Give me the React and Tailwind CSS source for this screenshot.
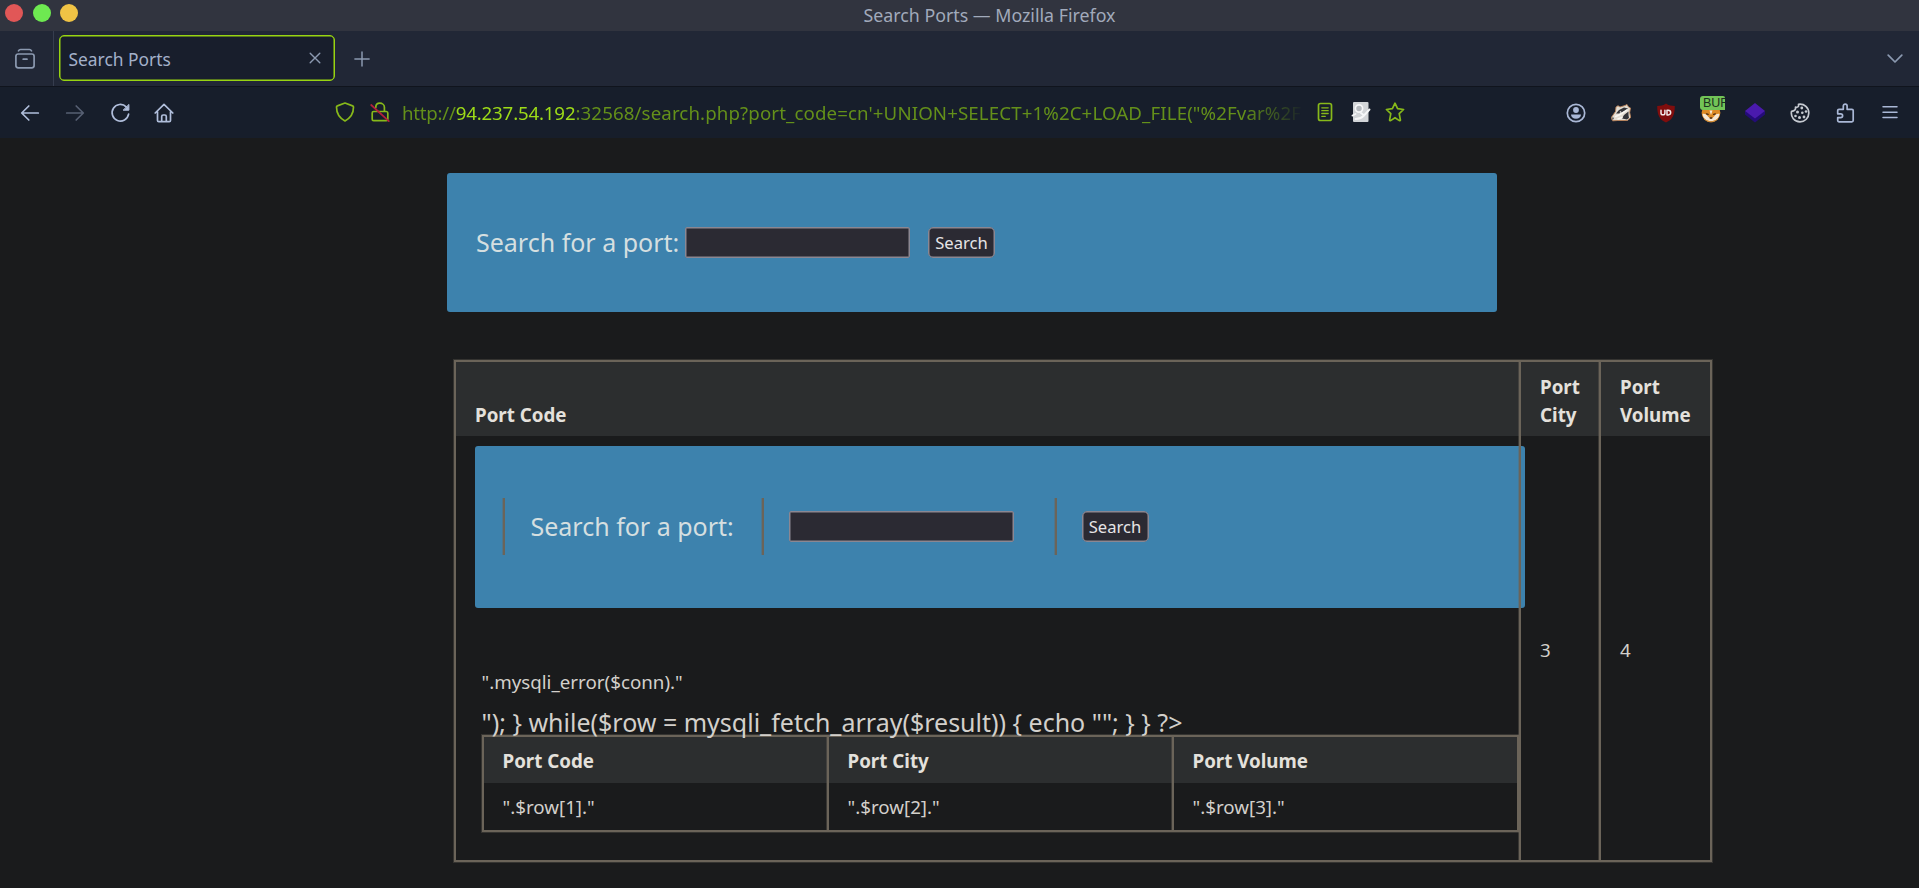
const LEFT_LINE = "border-l-2 border-[#6b6459] shadow-[-1px_0_0_rgba(107,100,89,0.4)]";
const FRAME = "border-2 border-[#6b6459] shadow-[0_0_0_1px_rgba(107,100,89,0.35)]";

function TitleBar() {
  return (
    <header className="grid h-[31px] shrink-0 grid-cols-[1fr_auto_1fr] items-center bg-[#31343f]">
      <div className="flex gap-[9.5px] self-start pt-[4px] pl-[5px]">
        <span className="size-[18px] rounded-full bg-[#e15757]" />
        <span className="size-[18px] rounded-full bg-[#6ee951]" />
        <span className="size-[18px] rounded-full bg-[#f0c345]" />
      </div>
      <h1 className="pl-[60px] text-[17.8px] leading-none whitespace-nowrap text-[#a1aabb]">Search Ports — Mozilla Firefox</h1>
      <span />
    </header>
  );
}

function TabStrip() {
  return (
    <div className="flex h-[55px] shrink-0 items-stretch bg-[#212736] text-[#8b99b0]">
      <div className="flex w-[54px] items-center border-r border-[#363d4e] pl-[14px]">
        <svg className="size-[22px]" viewBox="0 0 22 22" fill="none" stroke="currentColor" strokeWidth="1.7" strokeLinecap="round">
          <rect x="1.9" y="6" width="18.2" height="13.8" rx="2.3" />
          <path d="M4.5 2.8C5 1.9 5.6 1.5 6.5 1.5h9c.9 0 1.5.4 2 1.3M9.2 11.2h3.8" />
        </svg>
      </div>
      <div className="mt-[4px] ml-[5px] flex h-[46px] w-[276px] items-center justify-between rounded-[5px] border border-[#98d411] bg-[#181e2c] pr-[13px] pl-[8.5px] shadow-[inset_0_0_0_0.5px_#98d411]">
        <span className="mt-[2px] text-[17.4px] text-[#a3b0c9]">Search Ports</span>
        <svg className="size-[12px]" viewBox="0 0 12 12" stroke="currentColor" strokeWidth="1.4" strokeLinecap="round">
          <path d="M1.2 1.2l9.6 9.6M10.8 1.2l-9.6 9.6" />
        </svg>
      </div>
      <svg className="mt-px ml-[19px] size-[16px] self-center" viewBox="0 0 16 16" stroke="currentColor" strokeWidth="1.5" strokeLinecap="round">
        <path d="M8 .9v14.2M.9 8h14.2" />
      </svg>
      <svg className="mr-[16px] ml-auto size-[16px] self-center" viewBox="0 0 16 16" fill="none" stroke="currentColor" strokeWidth="1.7" strokeLinecap="round" strokeLinejoin="round">
        <path d="M1.2 4.2L8 11l6.8-6.8" />
      </svg>
    </div>
  );
}

function Icon({ children, className }) {
  return (
    <svg className={`size-[20px] shrink-0 ${className}`} viewBox="0 0 20 20" fill="none" stroke="currentColor" strokeWidth="1.7" strokeLinecap="round" strokeLinejoin="round">
      {children}
    </svg>
  );
}

function NavButtons() {
  return (
    <div className="flex w-[335px] shrink-0 items-center gap-[24.8px] pl-[20px] text-[#b0bedb]">
      <Icon className="">
        <path d="M18.3 10H1.9M8.8 3L1.7 10l7.1 7" />
      </Icon>
      <Icon className="text-[#576073]">
        <path d="M1.7 10h16.4M11.2 3l7.1 7-7.1 7" />
      </Icon>
      <Icon className="">
        <path d="M18.6 11.2A8.3 8.3 0 1 1 16.2 3.8" />
        <path d="M18.9 1.8v5.4h-5.4z" fill="currentColor" strokeWidth="1" />
      </Icon>
      <Icon className="">
        <path d="M1.2 10L10 1.4l8.8 8.6M3.5 8.5v8.9c0 .8.5 1.3 1.3 1.3h10.4c.8 0 1.3-.5 1.3-1.3V8.5M7.700 18.2v-4.7c0-.9.6-1.5 1.5-1.5h1.6c.9 0 1.5.6 1.5 1.5v4.7" />
      </Icon>
    </div>
  );
}

function UrlBar() {
  return (
    <div className="flex w-[1073px] shrink-0 items-center text-[#87b91a]">
      <Icon className="">
        <path d="M10 1l7.6 2.9c.6.2.9.6.9 1.200 0 5.900-2.200 10.700-8.500 13.800C3.700 15.800 1.500 11 1.500 5.100c0-.6.3-1 .9-1.200z" />
      </Icon>
      <Icon className="ml-[15px]">
        <path d="M3.600 9.500h12.800a1.500 1.500 0 0 1 1.400 1.500v6.300c0 .8-.6 1.400-1.400 1.400H3.600c-.8 0-1.400-.6-1.400-1.400V11c0-.8.6-1.500 1.400-1.500zM5.800 5.500V5.200C5.800 2.900 7.500 1.200 9.800 1.200s4.600 1.700 4.600 4v4" />
        <path d="M1.200 3l17.600 16.200" stroke="#b5203c" />
      </Icon>
      <div className="mt-px ml-[12px] w-[902px] overflow-hidden text-[18.7px] whitespace-nowrap text-[#64901a] [mask-image:linear-gradient(to_right,black_calc(100%-60px),transparent)]">
        <span className="tracking-[-0.25px]">http://</span>
        <span className="tracking-[-0.17px] text-[#9ddb18]">94.237.54.192</span>
        <span className="tracking-[0.11px]">:32568/search.php?port_code=cn'+UNION+SELECT+1%2C+LOAD_FILE("%2Fvar%2F</span>
      </div>
      <Icon className="ml-[11px]">
        <rect x="3.500" y="1.500" width="13" height="17" rx="2" />
        <path d="M6.800 5.800h6.400M6.800 8.700h6.400M6.800 11.500h6.400M6.800 14.300h3.500" strokeWidth="1.300" />
      </Icon>
      <Icon className="ml-[16px]">
        <rect x="2" y="0" width="15.500" height="20" rx="1" fill="#d2d5d8" stroke="none" />
        <circle cx="8" cy="6.500" r="3.600" stroke="#f6f7f8" fill="#b5b9be" />
        <path d="M1.500 13.500l3-1.500M4.500 17c3 0 6-1 8-3l6-6.500M10 11l2.500 2" stroke="#f6f7f8" strokeWidth="1.900" />
      </Icon>
      <Icon className="ml-[14px]">
        <path d="M10 1.200l2.600 5.500 6 .8-4.400 4.200 1.200 6.200c.1.700-.5 1-1 .7L10 15.700l-4.400 2.900c-.5.300-1.100 0-1-.7l1.200-6.200L1.400 7.500l6-.8z" />
      </Icon>
    </div>
  );
}

function Extensions() {
  return (
    <div className="ml-auto flex items-center gap-[24.9px] pr-[19px] text-[#aab8d6]">
      <Icon className="">
        <circle cx="10" cy="10" r="8.700" />
        <circle cx="10" cy="7" r="2.900" fill="currentColor" stroke="none" />
        <path d="M5 11.500h10c0 2.500-2 4.200-5 4.200s-5-1.700-5-4.200z" fill="currentColor" stroke="none" />
      </Icon>
      <Icon className="">
        <path d="M.3 14.500l4.200-6L5 4l2-1.300L9 4l5-1.500 2-1 1.500 2.500 2 1-.8 4.500 1 5-3.200 3H6.500l-4.500.3z" fill="#e3ddd3" stroke="#b98158" strokeWidth=".9" />
        <path d="M5 10.500L8 7l5-2.500 4 1-4 3-5 2zM11 15.500l2-3.500 4.500-3.500V12l.5 3-2 1.500zM.8 14.500l2.200.2-1 2z" fill="#34353a" stroke="none" />
        <path d="M4.500 13.500l4.500-2 7-4.500M7 16l4-1.500" stroke="#f8f6f2" strokeWidth="1.500" />
        <circle cx="9.500" cy="9" r=".8" fill="#f8f6f2" stroke="none" />
      </Icon>
      <Icon className="">
        <path d="M10 .5c2.500 1.800 5.500 2.400 8.800 2.500 0 8.500-2 13.500-8.800 16.600C3.200 16.500 1.200 11.500 1.200 3 4.500 2.900 7.500 2.300 10 .5z" fill="#800d0d" stroke="none" />
        <path d="M5 7.300v2.600c0 2.600 3.900 2.600 3.900 0V7.300M11 7.300v4.600h1.200c3.300 0 3.300-4.600 0-4.600z" stroke="#f1e9e9" strokeWidth="1.500" />
      </Icon>
      <div className="relative left-[1px]">
        <Icon className="">
          <circle cx="10" cy="9.800" r="9.400" fill="#dd8a26" stroke="none" />
          <path d="M1.500 11c2-.5 4 .3 5 2l1.500 1.500 2 1.500 2-1.500 1.500-1.500c1-1.700 3-2.500 5-2-.5 4.500-4 7-8.500 7s-8-2.500-8.500-7z" fill="#f6e8d6" stroke="none" />
          <path d="M8.500 7.500h3L10 12z" fill="#f6e8d6" stroke="none" />
          <path d="M5.500 10.800l1.600.6M14.300 10.800l-1.600.6M9.200 15h1.600" stroke="#4a2c17" strokeWidth="1.300" />
          <path d="M3.500 16.200c3.500 3.500 9.500 3.500 13 0" stroke="#c98a3c" strokeWidth="1" />
        </Icon>
        <span className="absolute -top-[7px] -left-[1px] h-[14px] w-[25px] overflow-hidden rounded-l-[3px] rounded-tr-[2px] bg-[#72c457] pl-[2.5px] font-['Liberation_Sans'] text-[12.5px] leading-[14px] text-[#1c3120]">BUR</span>
      </div>
      <Icon className="">
        <path d="M0 11.500V8l10 6 10-6v3.500L10 19.500z" fill="#240c78" stroke="none" />
        <path d="M10 0l10 8-10 7.500L0 8z" fill="#4a1aad" stroke="none" />
      </Icon>
      <Icon className="text-[#c6cad1]">
        <path d="M8.500 1.300C9 3.500 7.800 4.700 5.500 4.200c.3 2.600-1 4-4 4.100C.5 14 4.500 18.800 10 18.800c5 0 8.800-3.900 8.800-8.800C18.800 4.800 14.500.5 8.500 1.300z" />
        <g fill="currentColor" stroke="none">
          <circle cx="11.800" cy="5" r="1.400" />
          <circle cx="7.500" cy="9" r="1.500" />
          <circle cx="12.300" cy="9.800" r="1.300" />
          <circle cx="16" cy="8.500" r="1.300" />
          <circle cx="5.500" cy="13" r="1.300" />
          <circle cx="9.500" cy="14.500" r="1.500" />
          <circle cx="14" cy="14" r="1.400" />
        </g>
      </Icon>
      <Icon className="">
        <path d="M8.300 6.300V3a1.900 1.900 0 0 1 3.800 0v3.300h4.800c.8 0 1.300.5 1.300 1.300v10c0 .8-.5 1.300-1.300 1.300H4c-.8 0-1.300-.5-1.300-1.300v-3h3a1.900 1.900 0 0 0 0-3.800h-3V7.600c0-.8.5-1.300 1.300-1.300z" />
      </Icon>
      <Icon className="">
        <path d="M3 3.800h14M3 9.200h14M3 14.600h14" strokeWidth="1.500" />
      </Icon>
    </div>
  );
}

function TextField() {
  return <input className="h-[31px] w-[225px] rounded-[2px] border border-[#8b8792] bg-[#2b2a33] shadow-[inset_0_0_0_0.5px_#8b8792] outline-none" />;
}

function SearchButton() {
  return (
    <button className="h-[31px] w-[67px] rounded-[5px] border border-[#8b8792] bg-[#2b2a33] pt-[2px] text-[16.6px] leading-none text-[#e6e4e6] shadow-[inset_0_0_0_0.5px_#8b8792]">Search</button>
  );
}

function ResultTable() {
  const columns = [
    ["Port Code", '".$row[1]."'],
    ["Port City", '".$row[2]."'],
    ["Port Volume", '".$row[3]."'],
  ];
  return (
    <div className={`ml-[7px] grid w-[1037px] grid-cols-[343px_345px_345px] ${FRAME}`}>
      {columns.map(([name, value], i) => (
        <div key={name} className={i ? LEFT_LINE : ""}>
          <div className="flex h-[46px] items-center bg-[#2c2e2f] pl-[18.5px] font-bold text-[#e4e1dc]">{name}</div>
          <div className="flex h-[47px] items-center pl-[18.5px]">{value}</div>
        </div>
      ))}
    </div>
  );
}

export default function App() {
  return (
    <div className="flex h-[888px] w-[1919px] flex-col overflow-hidden bg-[#1a1b1c] font-['Noto_Sans',sans-serif]">
      <TitleBar />
      <TabStrip />
      <nav className="flex h-[52px] shrink-0 items-center border-t border-[#10141d] bg-[#171e2b]">
        <NavButtons />
        <UrlBar />
        <Extensions />
      </nav>

      <main className="pt-[35px] text-[18.75px] leading-[27.4px] text-[#d3d0cb]">
        <section className="ml-[447px] flex h-[139px] w-[1050px] items-center rounded-[3px] bg-[#3d82ad] pl-[29px]">
          <span className="mt-px w-[209px] shrink-0 text-[25px] whitespace-nowrap text-[#d5dfe0]">Search for a port:</span>
          <TextField />
          <span className="w-[18px]" />
          <SearchButton />
        </section>

        <div className={`mt-[48px] ml-[454px] grid w-[1258px] grid-cols-[1063px_80px_111px] grid-rows-[74px_424px] ${FRAME}`}>
          <div className="flex items-end bg-[#2c2e2f] pb-[8px] pl-[19px] font-bold text-[#e4e1dc]">Port Code</div>
          <div className={`flex items-end ${LEFT_LINE} bg-[#2c2e2f] pb-[8px] pl-[19px] font-bold text-[#e4e1dc]`}>Port<br />City</div>
          <div className={`flex items-end ${LEFT_LINE} bg-[#2c2e2f] pb-[8px] pl-[19px] font-bold text-[#e4e1dc]`}>Port<br />Volume</div>

          <div className="pt-[10px] pl-[19px]">
            <div className="flex h-[161.5px] w-[1050px] items-center rounded-[3px] bg-[#3d82ad] pl-[28px]">
              <div className={`flex h-[57px] w-[259px] items-center ${LEFT_LINE} pl-[25.5px] text-[25px] whitespace-nowrap text-[#d5dfe0]`}>Search for a port:</div>
              <div className={`flex h-[57px] w-[292.5px] items-center ${LEFT_LINE} pl-[25px]`}>
                <TextField />
              </div>
              <div className={`flex h-[57px] items-center ${LEFT_LINE} pl-[25px]`}>
                <SearchButton />
              </div>
            </div>
            <p className="mt-[60.5px] ml-[6.5px]">".mysqli_error($conn)."</p>
            <p className="relative mt-[14px] ml-[6.5px] h-[26px] text-[25px] whitespace-nowrap">{'"); } while($row = mysqli_fetch_array($result)) { echo ""; } } ?>'}</p>
            <ResultTable />
          </div>
          <div className={`flex items-center ${LEFT_LINE} pt-[3px] pl-[19px]`}>3</div>
          <div className={`flex items-center ${LEFT_LINE} pt-[3px] pl-[19px]`}>4</div>
        </div>
      </main>
    </div>
  );
}
